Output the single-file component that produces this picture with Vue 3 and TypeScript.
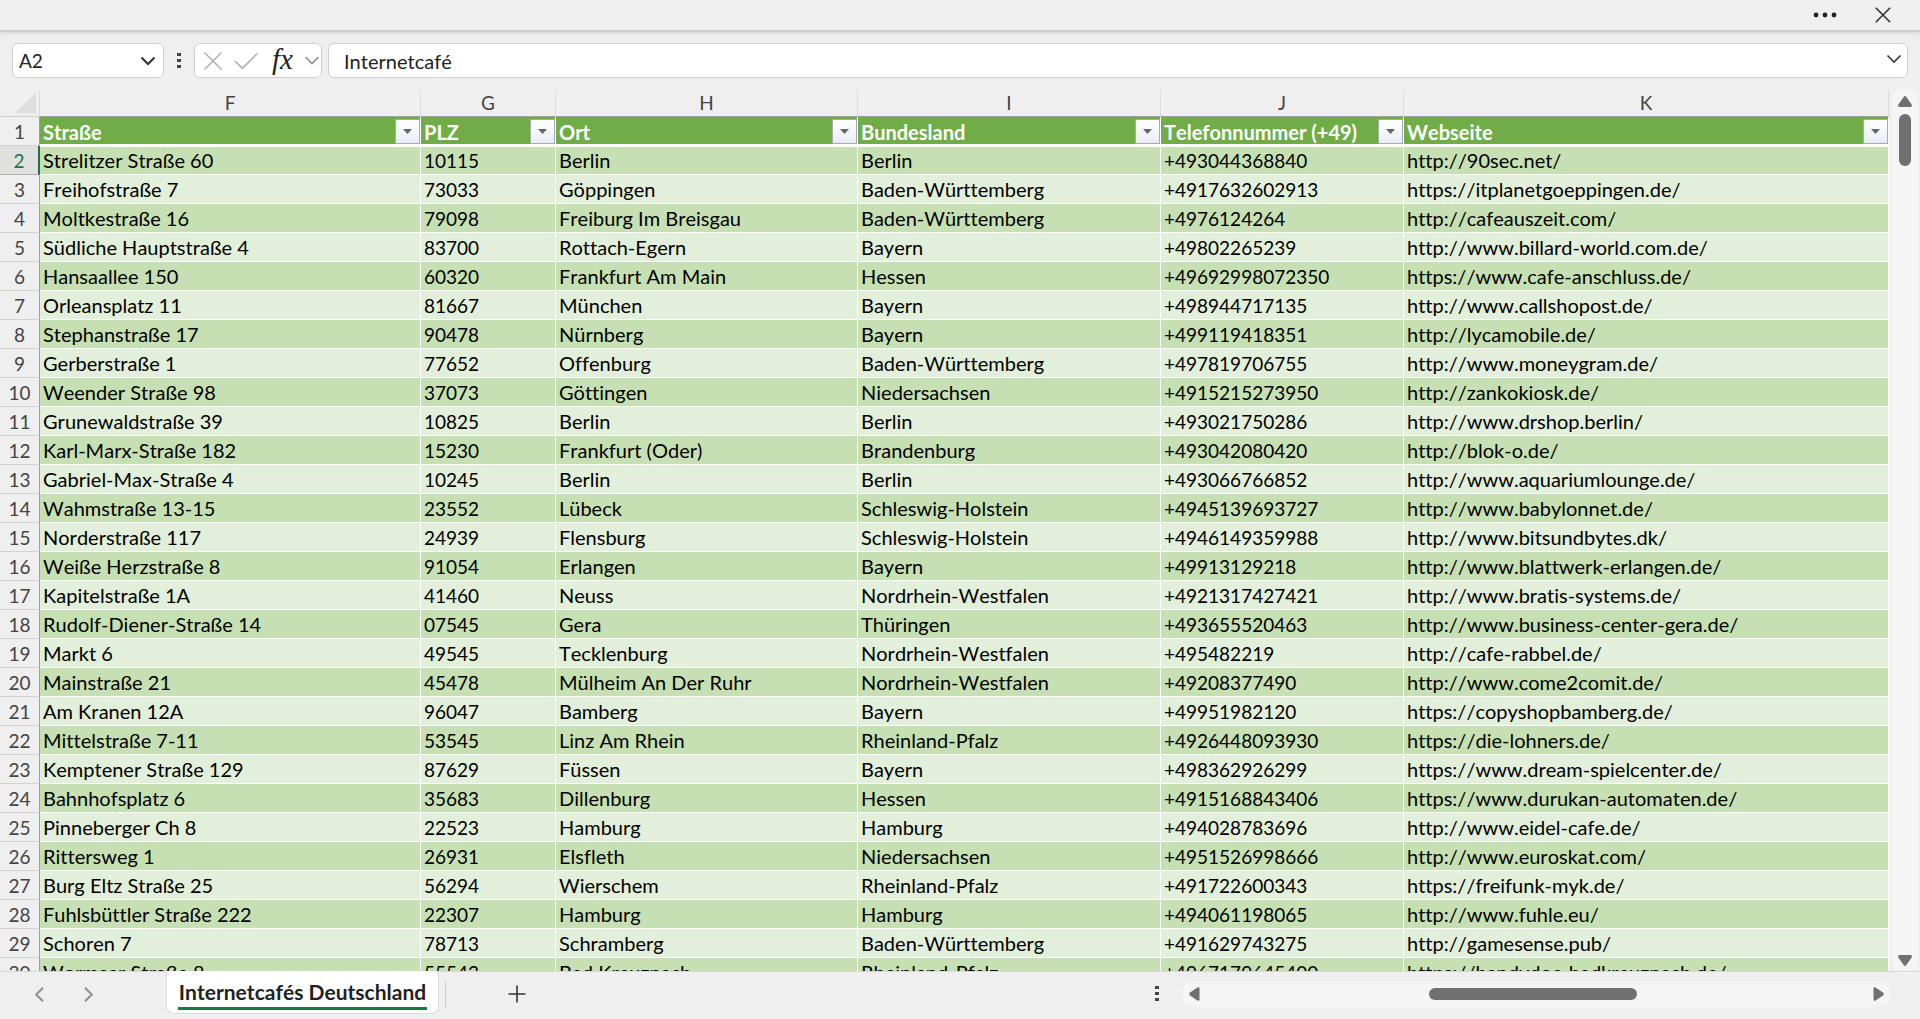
<script setup lang="ts">
type Row = [string, string, string, string, string, string]

interface Column {
  letter: string
  title: string
  cls: string
  numeric?: boolean
}

const columns: Column[] = [
  { letter: 'F', title: 'Straße', cls: 'col-f' },
  { letter: 'G', title: 'PLZ', cls: 'col-g', numeric: true },
  { letter: 'H', title: 'Ort', cls: 'col-h' },
  { letter: 'I', title: 'Bundesland', cls: 'col-i' },
  { letter: 'J', title: 'Telefonnummer (+49)', cls: 'col-j', numeric: true },
  { letter: 'K', title: 'Webseite', cls: 'col-k' },
]

const rows: Row[] = [
  ['Strelitzer Straße 60', '10115', 'Berlin', 'Berlin', '+493044368840', 'http://90sec.net/'],
  ['Freihofstraße 7', '73033', 'Göppingen', 'Baden-Württemberg', '+4917632602913', 'https://itplanetgoeppingen.de/'],
  ['Moltkestraße 16', '79098', 'Freiburg Im Breisgau', 'Baden-Württemberg', '+4976124264', 'http://cafeauszeit.com/'],
  ['Südliche Hauptstraße 4', '83700', 'Rottach-Egern', 'Bayern', '+49802265239', 'http://www.billard-world.com.de/'],
  ['Hansaallee 150', '60320', 'Frankfurt Am Main', 'Hessen', '+49692998072350', 'https://www.cafe-anschluss.de/'],
  ['Orleansplatz 11', '81667', 'München', 'Bayern', '+498944717135', 'http://www.callshopost.de/'],
  ['Stephanstraße 17', '90478', 'Nürnberg', 'Bayern', '+499119418351', 'http://lycamobile.de/'],
  ['Gerberstraße 1', '77652', 'Offenburg', 'Baden-Württemberg', '+497819706755', 'http://www.moneygram.de/'],
  ['Weender Straße 98', '37073', 'Göttingen', 'Niedersachsen', '+4915215273950', 'http://zankokiosk.de/'],
  ['Grunewaldstraße 39', '10825', 'Berlin', 'Berlin', '+493021750286', 'http://www.drshop.berlin/'],
  ['Karl-Marx-Straße 182', '15230', 'Frankfurt (Oder)', 'Brandenburg', '+493042080420', 'http://blok-o.de/'],
  ['Gabriel-Max-Straße 4', '10245', 'Berlin', 'Berlin', '+493066766852', 'http://www.aquariumlounge.de/'],
  ['Wahmstraße 13-15', '23552', 'Lübeck', 'Schleswig-Holstein', '+4945139693727', 'http://www.babylonnet.de/'],
  ['Norderstraße 117', '24939', 'Flensburg', 'Schleswig-Holstein', '+4946149359988', 'http://www.bitsundbytes.dk/'],
  ['Weiße Herzstraße 8', '91054', 'Erlangen', 'Bayern', '+49913129218', 'http://www.blattwerk-erlangen.de/'],
  ['Kapitelstraße 1A', '41460', 'Neuss', 'Nordrhein-Westfalen', '+4921317427421', 'http://www.bratis-systems.de/'],
  ['Rudolf-Diener-Straße 14', '07545', 'Gera', 'Thüringen', '+493655520463', 'http://www.business-center-gera.de/'],
  ['Markt 6', '49545', 'Tecklenburg', 'Nordrhein-Westfalen', '+495482219', 'http://cafe-rabbel.de/'],
  ['Mainstraße 21', '45478', 'Mülheim An Der Ruhr', 'Nordrhein-Westfalen', '+49208377490', 'http://www.come2comit.de/'],
  ['Am Kranen 12A', '96047', 'Bamberg', 'Bayern', '+49951982120', 'https://copyshopbamberg.de/'],
  ['Mittelstraße 7-11', '53545', 'Linz Am Rhein', 'Rheinland-Pfalz', '+4926448093930', 'https://die-lohners.de/'],
  ['Kemptener Straße 129', '87629', 'Füssen', 'Bayern', '+498362926299', 'https://www.dream-spielcenter.de/'],
  ['Bahnhofsplatz 6', '35683', 'Dillenburg', 'Hessen', '+4915168843406', 'https://www.durukan-automaten.de/'],
  ['Pinneberger Ch 8', '22523', 'Hamburg', 'Hamburg', '+494028783696', 'http://www.eidel-cafe.de/'],
  ['Rittersweg 1', '26931', 'Elsfleth', 'Niedersachsen', '+4951526998666', 'http://www.euroskat.com/'],
  ['Burg Eltz Straße 25', '56294', 'Wierschem', 'Rheinland-Pfalz', '+491722600343', 'https://freifunk-myk.de/'],
  ['Fuhlsbüttler Straße 222', '22307', 'Hamburg', 'Hamburg', '+494061198065', 'http://www.fuhle.eu/'],
  ['Schoren 7', '78713', 'Schramberg', 'Baden-Württemberg', '+491629743275', 'http://gamesense.pub/'],
  ['Wormser Straße 8', '55543', 'Bad Kreuznach', 'Rheinland-Pfalz', '+4967179645400', 'https://handydoc-badkreuznach.de/'],
]
</script>

<template>
  <div class="app">
    <header class="titlebar">
      <button class="plain" type="button" aria-label="Mehr">
        <svg width="24" height="6" viewBox="0 0 24 6"><circle cx="3" cy="3" r="2.4" /><circle cx="12" cy="3" r="2.4" /><circle cx="21" cy="3" r="2.4" /></svg>
      </button>
      <button class="plain" type="button" aria-label="Schließen">
        <svg class="stroke" width="16" height="16" viewBox="0 0 16 16"><path d="M0.8 0.8 15.2 15.2M15.2 0.8 0.8 15.2" /></svg>
      </button>
    </header>

    <div class="formulabar">
      <div class="box namebox">
        <input class="field" type="text" value="A2" aria-label="Namenfeld" />
        <button class="plain" type="button" aria-label="Namen anzeigen">
          <svg class="stroke dark" width="16" height="10" viewBox="0 0 16 10"><path d="M1.5 1.5 8 8 14.5 1.5" /></svg>
        </button>
      </div>
      <svg class="grip" width="4" height="16" viewBox="0 0 4 16"><path d="M0 0h4v3H0zM0 6h4v3H0zM0 12h4v3H0z" /></svg>
      <div class="box actions">
        <button class="plain" type="button" aria-label="Abbrechen">
          <svg class="stroke faint" width="18" height="18" viewBox="0 0 18 18"><path d="M.5 .5 17.5 17.5M17.5 .5 .5 17.5" /></svg>
        </button>
        <button class="plain" type="button" aria-label="Eingeben">
          <svg class="stroke faint" width="24" height="18" viewBox="0 0 24 18"><path d="M.8 9 8.5 16.3 23.3 1.5" /></svg>
        </button>
        <button class="plain fx" type="button" aria-label="Funktion einfügen">fx</button>
        <button class="plain" type="button" aria-label="Funktionen">
          <svg class="stroke mid" width="14" height="9" viewBox="0 0 14 9"><path d="M0.5 1 7 7.5 13.5 1" /></svg>
        </button>
      </div>
      <div class="box formula">
        <input class="field" type="text" value="Internetcafé" aria-label="Bearbeitungsleiste" />
        <button class="plain" type="button" aria-label="Erweitern">
          <svg class="stroke" width="14" height="14" viewBox="0 0 14 14"><path d="M.5 1.5 7 8 13.5 1.5" /></svg>
        </button>
      </div>
    </div>

    <main class="workspace">
      <div class="viewport">
        <table class="sheet">
          <colgroup>
            <col class="col-n" />
            <col v-for="c in columns" :key="c.letter" :class="c.cls" />
          </colgroup>
          <thead>
            <tr class="letters">
              <th class="corner"><svg width="21" height="20" viewBox="0 0 21 20"><path d="M21 0V20H0z" /></svg></th>
              <th v-for="c in columns" :key="c.letter" scope="col">{{ c.letter }}</th>
            </tr>
          </thead>
          <tbody>
            <tr class="titles">
              <th class="num" scope="row">1</th>
              <td v-for="c in columns" :key="c.letter">
                <div class="title">
                  <span>{{ c.title }}</span>
                  <button class="filter" type="button" :aria-label="'Filter ' + c.title">
                    <svg width="9" height="5" viewBox="0 0 9 5"><path d="M0 0H9L4.5 5z" /></svg>
                  </button>
                </div>
              </td>
            </tr>
            <tr v-for="(row, i) in rows" :key="i" class="data" :class="{ active: i === 0 }">
              <th class="num" scope="row">{{ i + 2 }}</th>
              <td v-for="(cell, j) in row" :key="j" :class="{ numeric: columns[j].numeric }">{{ cell }}</td>
            </tr>
          </tbody>
        </table>
      </div>
      <div class="vscroll">
        <svg width="14" height="11" viewBox="0 0 14 11"><path d="M5.6 1Q7 -.8 8.4 1L13.6 8.5Q14.4 11 12.5 11H1.5Q-.4 11 .4 8.5z" /></svg>
        <div class="vthumb"></div>
        <svg width="14" height="11" viewBox="0 0 14 11"><path d="M5.6 10Q7 11.8 8.4 10L13.6 2.5Q14.4 0 12.5 0H1.5Q-.4 0 .4 2.5z" /></svg>
      </div>
    </main>

    <footer class="tabs">
      <nav class="arrows">
        <button class="plain" type="button" aria-label="Vorheriges Blatt">
          <svg class="stroke mid thick" width="9" height="15" viewBox="0 0 9 15"><path d="M8 .8 1.2 7.5 8 14.2" /></svg>
        </button>
        <button class="plain" type="button" aria-label="Nächstes Blatt">
          <svg class="stroke mid thick" width="9" height="15" viewBox="0 0 9 15"><path d="M1 .8 7.8 7.5 1 14.2" /></svg>
        </button>
      </nav>
      <button class="tab" type="button"><span>Internetcafés Deutschland</span></button>
      <div class="divider"></div>
      <button class="plain add" type="button" aria-label="Neues Blatt">
        <svg class="stroke" width="18" height="18" viewBox="0 0 18 18"><path d="M9 .5V17.5M.5 9H17.5" /></svg>
      </button>
      <svg class="grip hgrip" width="4" height="16" viewBox="0 0 4 16"><path d="M0 0h4v3H0zM0 6h4v3H0zM0 12h4v3H0z" /></svg>
      <div class="hscroll">
        <svg width="11" height="14" viewBox="0 0 11 14"><path d="M1 5.6Q-.8 7 1 8.4L8.5 13.6Q10.5 14.4 10.5 12.5V1.5Q10.5 -.4 8.5 .4z" /></svg>
        <div class="htrack"><div class="hthumb"></div></div>
        <svg width="11" height="14" viewBox="0 0 11 14"><path d="M10 5.6Q11.8 7 10 8.4L2.5 13.6Q.5 14.4 .5 12.5V1.5Q.5 -.4 2.5 .4z" /></svg>
      </div>
    </footer>
  </div>
</template>

<style>
body {
  margin: 0;
  background: #efefef;
}
</style>

<style scoped>
.app {
  display: flex;
  flex-direction: column;
  height: 100vh;
  overflow: hidden;
  background: #efefef;
  color: #000;
  font-family: Lato, "Noto Sans", sans-serif;
  font-size: 20px;
  font-kerning: none;
  font-variant-ligatures: none;
}

.plain {
  display: flex;
  align-items: center;
  justify-content: center;
  padding: 0;
  border: 0;
  background: none;
  color: #222;
  font: inherit;
}

svg {
  display: block;
  flex: none;
  overflow: visible;
  fill: currentColor;
}

.stroke {
  fill: none;
  stroke: #333;
  stroke-width: 1.6;
}

.stroke.dark {
  stroke-width: 2;
}

.stroke.faint {
  stroke: #b0b0b0;
}

.stroke.mid {
  stroke: #8f8f8f;
}

.stroke.thick {
  stroke-width: 2;
}

.titlebar {
  display: flex;
  flex: none;
  align-items: center;
  justify-content: flex-end;
  gap: 38px;
  box-sizing: border-box;
  height: 32px;
  padding: 0 29px 0 0;
  border-bottom: 2px solid #cdcdcd;
  box-shadow: 0 1px 5px #d4d4d4;
}

.formulabar {
  display: flex;
  flex: none;
  align-items: center;
  box-sizing: border-box;
  height: 58px;
  padding: 11px 12px 12px;
}

.box {
  display: flex;
  align-items: center;
  box-sizing: border-box;
  height: 35px;
  border: 1px solid #d0d0d0;
  border-radius: 6px;
  background: #fff;
}

.field {
  flex: 1;
  min-width: 0;
  padding: 0;
  border: 0;
  outline: 0;
  background: none;
  color: #222;
  font: inherit;
  font-kerning: none;
}

.namebox {
  width: 152px;
  padding: 0 7px 0 6px;
  font-size: 19px;
}

.grip {
  margin: 0 13px;
  color: #444;
}

.actions {
  justify-content: space-between;
  width: 128px;
  margin-right: 6px;
  padding: 0 2px 0 9px;
}

.fx {
  padding: 0 0 4px 2px;
  color: #222;
  font: italic 29px/30px "Liberation Serif", serif;
}

.formula {
  flex: 1;
  padding: 0 6px 0 15px;
}

.workspace {
  display: flex;
  flex: 1;
  min-height: 0;
}

.viewport {
  flex: 1;
  min-width: 0;
  overflow: hidden;
}

.sheet {
  width: 100%;
  table-layout: fixed;
  border-collapse: separate;
  border-spacing: 0;
}

.col-n { width: 40px; }
.col-f { width: 381px; }
.col-g { width: 135px; }
.col-h { width: 302px; }
.col-i { width: 303px; }
.col-j { width: 243px; }

th,
td {
  box-sizing: border-box;
  overflow: hidden;
  padding: 0;
  white-space: nowrap;
}

.letters th {
  height: 27px;
  border-right: 1px solid #dcdcdc;
  border-bottom: 1px solid #9f9f9f;
  color: #444;
  font-size: 19px;
  font-weight: 400;
  line-height: 26px;
}

.letters .corner {
  padding-left: 15px;
  border-bottom-color: #d0d0d0;
  color: #dedede;
}

.num {
  height: 29px;
  padding-top: 2px;
  border-right: 1px solid #a0a0a0;
  border-bottom: 1px solid #d2d2d2;
  color: #444;
  font-size: 19px;
  font-weight: 400;
  line-height: 26px;
  text-align: center;
}

.titles td {
  height: 29px;
  padding-left: 3px;
  border-right: 1px solid #fff;
  border-bottom: 2px solid #fff;
  background: #70ad47;
  color: #fff;
  font-weight: 700;
}

.title {
  display: flex;
  align-items: flex-end;
  justify-content: space-between;
  height: 27px;
  line-height: 24px;
}

.filter {
  display: flex;
  align-items: center;
  justify-content: center;
  box-sizing: border-box;
  width: 25px;
  height: 25px;
  padding: 0;
  border: 1px solid #a6abb3;
  background: linear-gradient(#fff, #e9edf5);
  color: #666;
}

.data td {
  height: 29px;
  padding: 0 0 0 3px;
  border-right: 1px solid #fff;
  border-bottom: 1px solid #fff;
  background: #e2efda;
  line-height: 28px;
}

.data .numeric {
  padding-top: 2px;
  font-size: 19px;
  line-height: 26px;
}

.data:nth-child(even) td {
  background: #c6e0b4;
}

.data.active td {
  padding-top: 0;
  border-top: 1px solid #fff;
  line-height: 27px;
}

.active .num {
  border-right: 2px solid #217346;
  border-bottom-color: #b0b0b0;
  background: #e0e0e0;
  color: #217346;
}

.vscroll {
  display: flex;
  flex: none;
  flex-direction: column;
  align-items: center;
  box-sizing: border-box;
  width: 26px;
  margin: -2px 2px -3px 3px;
  padding: 8px 0;
  border-radius: 12px;
  background: #f5f5f5;
  color: #707070;
}

.vthumb {
  width: 12px;
  height: 52px;
  margin: 7px 0 auto;
  border-radius: 6px;
  background: #707070;
}

.tabs {
  display: flex;
  flex: none;
  align-items: center;
  box-sizing: border-box;
  height: 48px;
  padding: 0 29px 3px 35px;
  border-top: 1px solid #d8d8d8;
}

.arrows {
  display: flex;
  gap: 40px;
  width: 131px;
}

.tab {
  align-self: flex-start;
  box-sizing: border-box;
  width: 273px;
  height: 43px;
  margin-top: -1px;
  padding: 0 11px;
  border: 1px solid #dcdcdc;
  border-top: 0;
  border-radius: 0 0 8px 8px;
  background: #fff;
  color: #222;
  font: inherit;
  font-size: 21px;
  font-weight: 700;
  font-kerning: none;
  white-space: nowrap;
}

.tab span {
  display: block;
  padding-top: 3px;
  border-bottom: 3px solid #107c41;
  line-height: 30px;
}

.divider {
  width: 1px;
  height: 28px;
  margin-left: 6px;
  background: #cfcfcf;
}

.add {
  margin-left: 62px;
}

.hgrip {
  margin: 0 23px 0 auto;
}

.hscroll {
  display: flex;
  align-items: center;
  box-sizing: border-box;
  width: 40%;
  max-width: 709px;
  height: 26px;
  padding: 0 7px;
  border-radius: 12px;
  background: #f5f5f5;
  color: #707070;
}

.htrack {
  flex: 1;
}

.hthumb {
  width: 31%;
  height: 12px;
  margin-left: 34%;
  border-radius: 6px;
  background: #707070;
}
</style>
